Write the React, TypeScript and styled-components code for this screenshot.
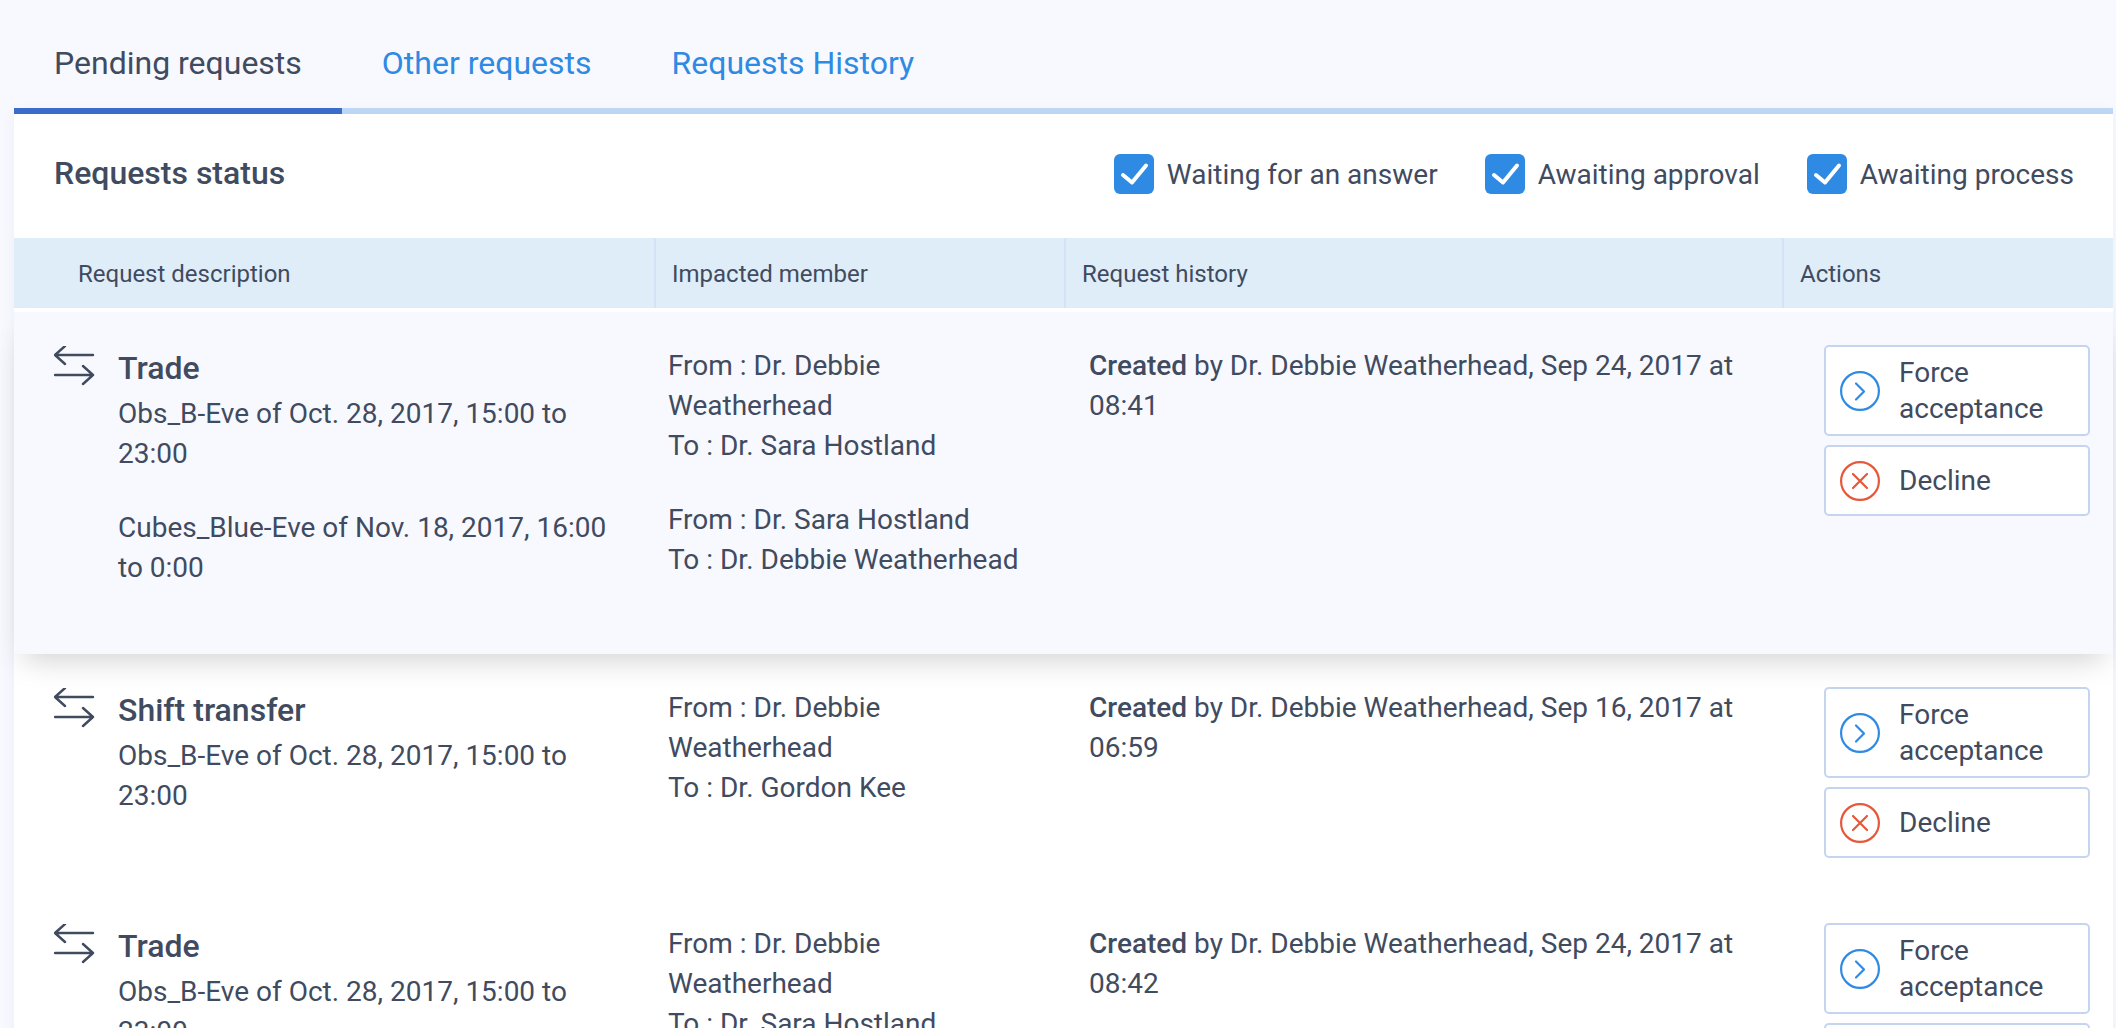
import React from "react";
import styled, { createGlobalStyle } from "styled-components";

const Global = createGlobalStyle`
  html, body { margin: 0; padding: 0; height: 100%; overflow: hidden; background: #f8f9fe; }
  body { font-family: Roboto, "Liberation Sans", sans-serif; color: #414b5f; }
  * { box-sizing: border-box; }
`;

const COLS = "642px 410px 718px 329px";

const Page = styled.div`
  height: 1028px;
  overflow: hidden;
  padding: 0 3px 0 14px;
`;
const Tabs = styled.nav`
  display: flex;
  height: 114px;
  border-bottom: 6px solid #bfdaf5;
`;
const Tab = styled.a<{ $active?: boolean }>`
  height: 114px;
  padding: 44px 40px 0;
  font-size: 32px;
  line-height: 38px;
  color: ${(p) => (p.$active ? "#414b5f" : "#2f8ae3")};
  border-bottom: 6px solid ${(p) => (p.$active ? "#3a6cc9" : "transparent")};
`;
const Panel = styled.main`
  background: #fff;
  box-shadow: 0 0 14px rgba(90, 120, 200, 0.08);
`;
const StatusBar = styled.div`
  height: 124px;
  display: flex;
  align-items: center;
  justify-content: space-between;
  padding: 0 39px 6px 40px;
`;
const StatusTitle = styled.h2`
  margin: 0;
  font-size: 32px;
  font-weight: 500;
`;
const Filters = styled.div`
  display: flex;
  gap: 47px;
  margin-top: 2px;
`;
const Filter = styled.label`
  display: flex;
  align-items: center;
  gap: 13px;
  font-size: 28px;
`;
const Box = styled.span`
  width: 40px;
  height: 40px;
  border-radius: 6px;
  background: #2f8ae3;
  display: block;
`;
const HeadRow = styled.div`
  display: grid;
  grid-template-columns: ${COLS};
  height: 70px;
  background: #dfedf9;
  margin-bottom: 4px;
`;
const HeadCell = styled.div<{ $first?: boolean }>`
  display: flex;
  align-items: center;
  font-size: 24px;
  padding: 2px 0 0 ${(p) => (p.$first ? "64px" : "16px")};
  border-right: 2px solid #d4e3f5;
  &:last-child { border-right: 0; }
`;
const Row = styled.section<{ $raised?: boolean }>`
  display: grid;
  grid-template-columns: ${COLS};
  padding: 32px 0;
  position: relative;
  background: ${(p) => (p.$raised ? "#f8f9fe" : "#fff")};
  box-shadow: ${(p) => (p.$raised ? "0 16px 28px -10px rgba(0,0,0,0.18)" : "none")};
  z-index: ${(p) => (p.$raised ? 1 : 0)};
  font-size: 28px;
  line-height: 40px;
`;
const DescCell = styled.div`
  display: flex;
  padding-left: 40px;
  padding-right: 21px;
`;
const TradeIcon = styled.svg`
  flex: none;
  width: 42px;
  height: 42px;
  margin: 2px 22px 0 0;
`;
const DescBody = styled.div`
  flex: 1;
  min-width: 0;
`;
const DescTitle = styled.h3`
  margin: 0 0 2px;
  font-size: 32px;
  font-weight: 500;
  line-height: 48px;
`;
const Para = styled.p`
  margin: 0 0 34px;
`;
const MemberCell = styled.div`
  padding: 2px 30px 0 12px;
`;
const HistoryCell = styled.div`
  padding: 2px 35px 0 23px;
`;
const Strong = styled.strong`
  font-weight: 500;
`;
const ActionCell = styled.div`
  display: flex;
  flex-direction: column;
  gap: 9px;
  padding: 1px 0 0 40px;
`;
const ActionButton = styled.button`
  width: 266px;
  min-height: 71px;
  display: flex;
  align-items: center;
  gap: 19px;
  padding: 7.5px 14px;
  background: #fff;
  border: 2px solid #c5d5ef;
  border-radius: 5px;
  font: inherit;
  line-height: 36px;
  color: inherit;
  text-align: left;
`;
const ActionIcon = styled.svg`
  flex: none;
  width: 40px;
  height: 40px;
`;

const Check = () => (
  <Box>
    <svg width="40" height="40" viewBox="0 0 40 40" fill="none">
      <path d="M9 21l9 7.5L32 11.5" stroke="#fff" strokeWidth="4" strokeLinecap="round" strokeLinejoin="round" />
    </svg>
  </Box>
);

const Arrows = () => (
  <TradeIcon viewBox="0 0 42 42" fill="none" stroke="#414b5f" strokeWidth="2.4" strokeLinecap="round" strokeLinejoin="round">
    <path d="M1 9h38M11 0L1 9l10 9" />
    <path d="M1 29h38M29 20l10 9-10 9" />
  </TradeIcon>
);

const Force = () => (
  <ActionButton>
    <ActionIcon viewBox="0 0 40 40" fill="none" stroke="#2f8ae3" strokeWidth="2.2">
      <circle cx="20" cy="20" r="18.9" />
      <path d="M16 12.5l8 8-8 8" strokeLinecap="round" strokeLinejoin="round" />
    </ActionIcon>
    <span>Force acceptance</span>
  </ActionButton>
);

const Decline = () => (
  <ActionButton>
    <ActionIcon viewBox="0 0 40 40" fill="none" stroke="#e5583a" strokeWidth="2.2">
      <circle cx="20" cy="20" r="18.9" />
      <path d="M13 13l14 14M27 13L13 27" strokeLinecap="round" />
    </ActionIcon>
    <span>Decline</span>
  </ActionButton>
);

type Req = {
  title: string;
  raised?: boolean;
  shifts: string[];
  members: [string, string][];
  created: string;
};

const rows: Req[] = [
  {
    title: "Trade",
    raised: true,
    shifts: ["Obs_B-Eve of Oct. 28, 2017, 15:00 to 23:00", "Cubes_Blue-Eve of Nov. 18, 2017, 16:00 to 0:00"],
    members: [
      ["From : Dr. Debbie Weatherhead", "To : Dr. Sara Hostland"],
      ["From : Dr. Sara Hostland", "To : Dr. Debbie Weatherhead"],
    ],
    created: "Sep 24, 2017 at 08:41",
  },
  {
    title: "Shift transfer",
    shifts: ["Obs_B-Eve of Oct. 28, 2017, 15:00 to 23:00"],
    members: [["From : Dr. Debbie Weatherhead", "To : Dr. Gordon Kee"]],
    created: "Sep 16, 2017 at 06:59",
  },
  {
    title: "Trade",
    shifts: ["Obs_B-Eve of Oct. 28, 2017, 15:00 to 23:00"],
    members: [["From : Dr. Debbie Weatherhead", "To : Dr. Sara Hostland"]],
    created: "Sep 24, 2017 at 08:42",
  },
];

export default function App() {
  return (
    <Page>
      <Global />
      <Tabs>
        <Tab $active>Pending requests</Tab>
        <Tab>Other requests</Tab>
        <Tab>Requests History</Tab>
      </Tabs>
      <Panel>
        <StatusBar>
          <StatusTitle>Requests status</StatusTitle>
          <Filters>
            {["Waiting for an answer", "Awaiting approval", "Awaiting process"].map((t) => (
              <Filter key={t}>
                <Check />
                {t}
              </Filter>
            ))}
          </Filters>
        </StatusBar>
        <HeadRow>
          <HeadCell $first>Request description</HeadCell>
          <HeadCell>Impacted member</HeadCell>
          <HeadCell>Request history</HeadCell>
          <HeadCell>Actions</HeadCell>
        </HeadRow>
        {rows.map((r, i) => (
          <Row key={i} $raised={r.raised}>
            <DescCell>
              <Arrows />
              <DescBody>
                <DescTitle>{r.title}</DescTitle>
                {r.shifts.map((s) => (
                  <Para key={s}>{s}</Para>
                ))}
              </DescBody>
            </DescCell>
            <MemberCell>
              {r.members.map((m) => (
                <Para key={m[0]}>
                  {m[0]}
                  <br />
                  {m[1]}
                </Para>
              ))}
            </MemberCell>
            <HistoryCell>
              <Strong>Created</Strong> by Dr. Debbie Weatherhead, {r.created}
            </HistoryCell>
            <ActionCell>
              <Force />
              <Decline />
            </ActionCell>
          </Row>
        ))}
      </Panel>
    </Page>
  );
}
